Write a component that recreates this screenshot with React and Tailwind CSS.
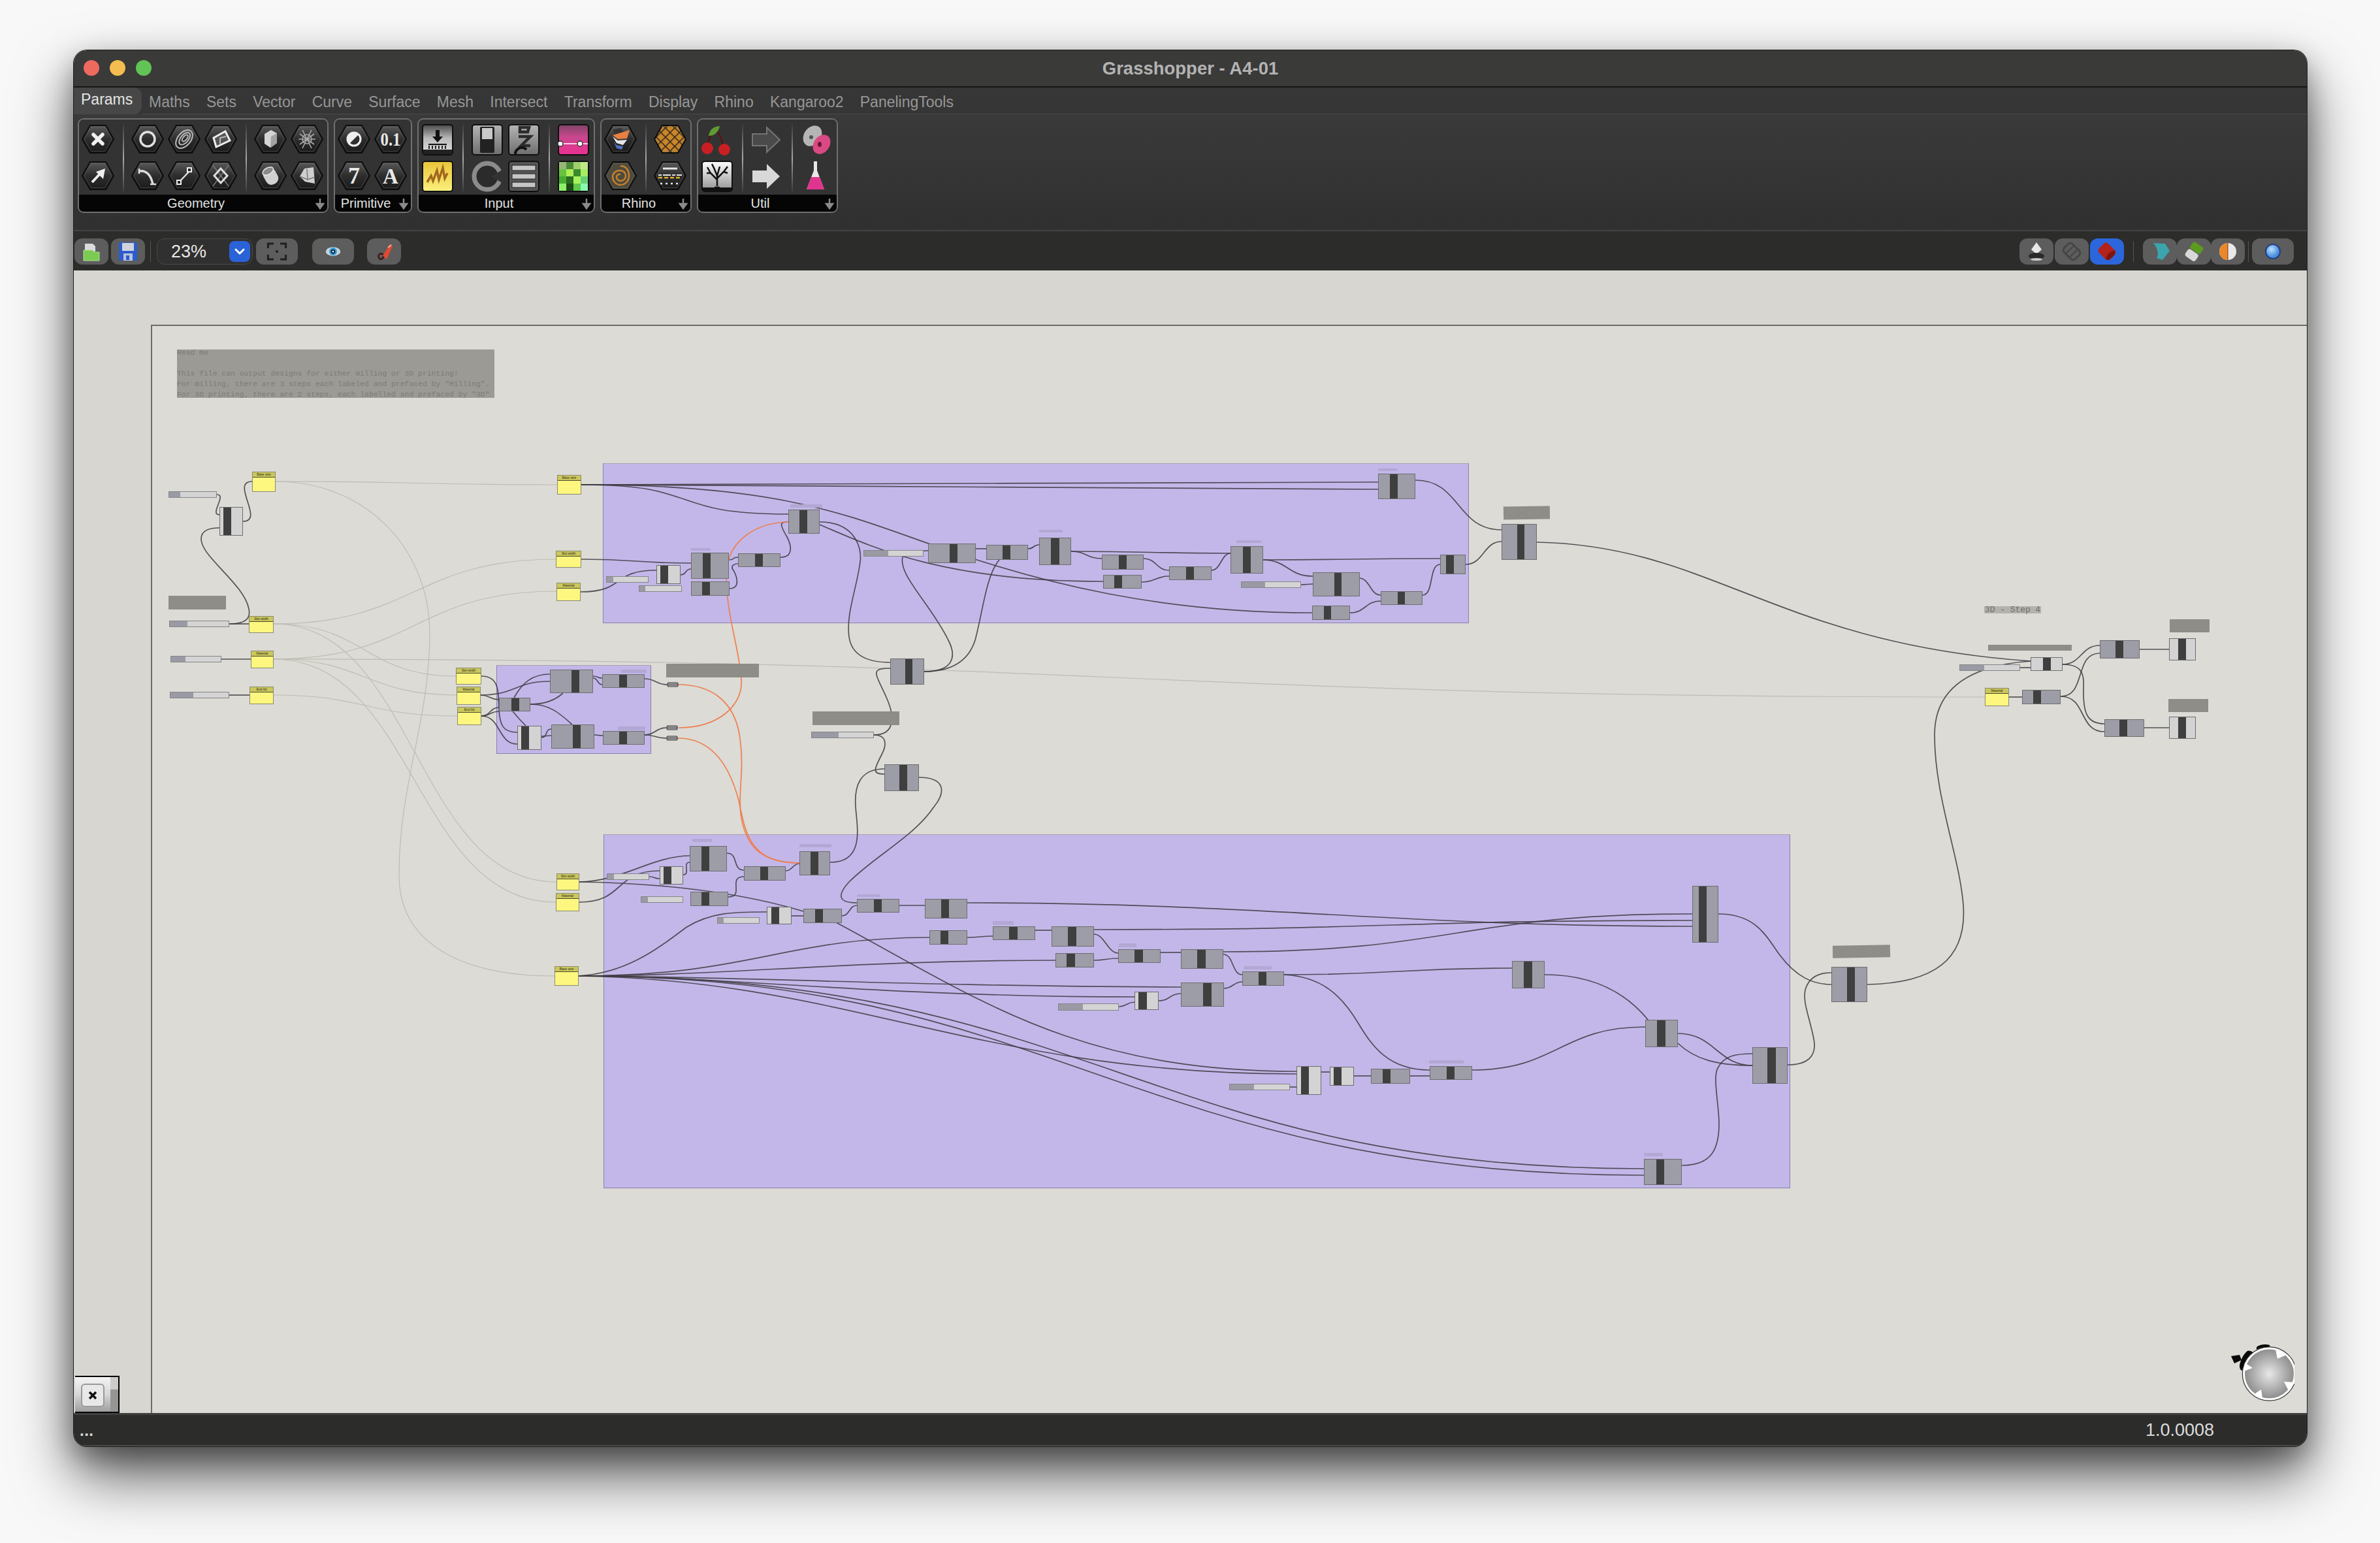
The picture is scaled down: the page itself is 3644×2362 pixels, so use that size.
import React from "react";
import { ChevronDown } from "lucide-react";

// canvas origin in page pixels, all node data below is in page pixels
const OX = 113;
const OY = 414;
const CW = 3419;
const CH = 1749;

const TABS = ["Maths", "Sets", "Vector", "Curve", "Surface", "Mesh", "Intersect", "Transform", "Display", "Rhino", "Kangaroo2", "PanelingTools"];

const README = [
  "Read me",
  "\u00a0",
  "This file can output designs for either milling or 3D printing!",
  'For milling, there are 3 steps each labeled and prefaced by "Milling".',
  'For 3D printing, there are 2 steps, each labelled and prefaced by "3D"',
];

const GROUPS = [
  [923, 709, 1326, 245],
  [760, 1018, 237, 136],
  [924, 1277, 1817, 542],
];

// x, y, w, h, bar x, bar w (dark strip)
const COMPS = [
  [2110, 725, 57, 39, 2128, 12],
  [1421, 832, 73, 30, 1454, 12],
  [1510, 834, 64, 23, 1535, 12],
  [1591, 823, 49, 42, 1609, 13],
  [1687, 849, 64, 23, 1713, 12],
  [1689, 880, 59, 21, 1706, 12],
  [1790, 867, 65, 21, 1816, 12],
  [1884, 836, 50, 42, 1903, 12],
  [2010, 876, 72, 37, 2043, 11],
  [2009, 927, 58, 22, 2027, 11],
  [2114, 905, 64, 21, 2140, 11],
  [2205, 849, 39, 30, 2214, 12],
  [2299, 802, 54, 55, 2323, 11],
  [1058, 846, 58, 40, 1076, 12],
  [1058, 890, 59, 22, 1075, 12],
  [1130, 847, 65, 21, 1156, 12],
  [1207, 780, 48, 37, 1224, 12],
  [842, 1025, 66, 36, 875, 12],
  [922, 1032, 65, 21, 948, 12],
  [764, 1068, 48, 21, 783, 12],
  [844, 1109, 66, 37, 877, 12],
  [923, 1119, 64, 21, 948, 12],
  [1363, 1008, 52, 40, 1386, 11],
  [1354, 1170, 53, 41, 1377, 12],
  [1056, 1295, 57, 39, 1074, 12],
  [1139, 1326, 64, 22, 1164, 12],
  [1224, 1303, 47, 37, 1241, 12],
  [1057, 1365, 58, 22, 1074, 12],
  [1230, 1391, 59, 22, 1248, 12],
  [1312, 1376, 65, 21, 1338, 12],
  [1416, 1376, 65, 30, 1441, 12],
  [1423, 1424, 58, 22, 1440, 12],
  [1520, 1418, 65, 21, 1545, 13],
  [1610, 1418, 65, 31, 1635, 13],
  [1616, 1459, 59, 22, 1633, 13],
  [1712, 1453, 65, 21, 1737, 13],
  [1808, 1453, 65, 30, 1833, 13],
  [1902, 1487, 64, 22, 1927, 12],
  [1808, 1504, 66, 37, 1842, 13],
  [2315, 1471, 50, 42, 2333, 13],
  [2591, 1356, 40, 87, 2601, 12],
  [2519, 1561, 50, 42, 2537, 13],
  [2683, 1603, 54, 56, 2706, 13],
  [2189, 1632, 65, 21, 2215, 12],
  [2099, 1636, 60, 23, 2117, 12],
  [2517, 1774, 58, 40, 2536, 12],
  [2804, 1480, 55, 54, 2828, 12],
  [3096, 1056, 59, 22, 3113, 12],
  [3215, 980, 61, 28, 3239, 12],
  [3222, 1101, 61, 27, 3245, 12],
];

const LIGHT_COMPS = [
  [336, 776, 36, 44, 342, 12],
  [1005, 865, 37, 29, 1011, 12],
  [792, 1111, 37, 37, 798, 12],
  [1010, 1326, 36, 28, 1016, 12],
  [1174, 1388, 38, 27, 1181, 12],
  [1737, 1518, 37, 28, 1743, 13],
  [2036, 1633, 37, 29, 2042, 12],
  [1985, 1632, 38, 44, 1992, 12],
  [3109, 1006, 49, 21, 3128, 12],
  [3321, 977, 41, 34, 3335, 12],
  [3321, 1097, 41, 34, 3335, 12],
];

const SLIDERS = [
  [258, 752, 74, 10, 17],
  [259, 950, 92, 10, 27],
  [261, 1004, 78, 10, 22],
  [260, 1059, 91, 10, 35],
  [928, 882, 65, 10, 10],
  [978, 896, 66, 10, 9],
  [1322, 842, 92, 10, 37],
  [1900, 890, 92, 10, 36],
  [1242, 1120, 96, 10, 41],
  [929, 1337, 65, 10, 10],
  [981, 1372, 65, 10, 10],
  [1098, 1404, 65, 10, 9],
  [1620, 1536, 93, 11, 37],
  [1882, 1659, 93, 10, 37],
  [3000, 1017, 93, 10, 37],
];

const PANELS = [
  [386, 722, 36, 31, "Base size"],
  [853, 727, 37, 30, "Base size"],
  [851, 843, 39, 26, "Slot width"],
  [852, 892, 37, 28, "Material"],
  [381, 943, 38, 26, "Slot width"],
  [384, 996, 35, 27, "Material"],
  [382, 1051, 37, 27, "End bit"],
  [698, 1022, 39, 26, "Slot width"],
  [699, 1051, 37, 28, "Material"],
  [700, 1082, 37, 28, "End bit"],
  [852, 1337, 35, 26, "Slot width"],
  [851, 1367, 36, 28, "Material"],
  [849, 1479, 37, 30, "Base size"],
  [3039, 1053, 37, 28, "Material"],
];

// gray scribble blocks, last value tilts it
const BLOCKS = [
  [258, 912, 88, 21, false],
  [1020, 1016, 142, 21, false],
  [1244, 1089, 133, 21, false],
  [2302, 775, 71, 20, true],
  [2806, 1447, 88, 19, true],
  [3044, 987, 128, 9, false],
  [3322, 948, 61, 20, false],
  [3320, 1070, 61, 20, false],
];

// faint name tags above components inside groups
const TAGS = [
  [2110, 717, 29, 4],
  [1591, 811, 36, 4],
  [1893, 827, 38, 4],
  [1058, 839, 30, 4],
  [1210, 772, 49, 5],
  [951, 1025, 39, 5],
  [946, 1112, 42, 6],
  [1060, 1284, 30, 5],
  [1224, 1292, 49, 5],
  [1312, 1369, 36, 4],
  [1520, 1410, 32, 6],
  [1713, 1444, 27, 6],
  [1904, 1479, 43, 5],
  [2188, 1623, 53, 5],
  [2517, 1765, 29, 5],
];

const RELAYS = [
  [1021, 1044],
  [1020, 1110],
  [1020, 1126],
];

// wire with horizontal tangents, the way grasshopper draws them
const w = (x1, y1, x2, y2, k) => {
  const d = k === undefined ? Math.max(Math.abs(x2 - x1) * 0.5, 10) : k;
  return `M${x1} ${y1} C${x1 + d} ${y1} ${x2 - d} ${y2} ${x2} ${y2}`;
};

const FAINT = [
  w(422, 737, 853, 742),
  "M422 737 C560 737 660 840 658 975 C656 1110 611 1200 611 1340 C611 1440 700 1494 849 1494",
  w(419, 955, 851, 856),
  w(419, 1009, 852, 905),
  w(419, 955, 698, 1035),
  w(419, 955, 852, 1350),
  w(419, 1009, 699, 1064),
  w(419, 1009, 851, 1381),
  w(419, 1009, 3039, 1067),
  w(419, 1064, 700, 1096),
];

const DARK = [
  w(332, 757, 336, 788, 16),
  w(372, 798, 386, 737, 34),
  "M352 955 C378 955 384 945 381 932 C376 905 340 875 320 850 C300 825 305 808 336 808",
  w(351, 955, 381, 955),
  w(339, 1009, 384, 1009),
  w(351, 1064, 382, 1064),
  // group 1
  w(890, 742, 2110, 738),
  w(890, 742, 2110, 749),
  w(890, 742, 1207, 787, 190),
  "M890 742 C1200 742 1300 790 1430 835 C1600 895 1780 938 2009 938",
  w(890, 856, 1058, 862),
  w(889, 906, 1005, 873, 70),
  w(1042, 880, 1058, 871),
  w(1116, 857, 1130, 853),
  "M1117 901 C1135 901 1128 880 1121 870 C1120 865 1125 863 1130 863",
  "M1195 853 C1215 853 1212 835 1205 822 C1192 800 1195 799 1207 799",
  "M1255 799 C1310 799 1320 840 1317 860 C1312 900 1295 940 1300 975 C1305 1010 1340 1014 1363 1014",
  "M1255 803 C1340 840 1450 890 1689 890",
  "M1415 1028 C1460 1028 1465 1005 1452 980 C1425 925 1375 880 1382 853 C1385 845 1400 843 1421 843",
  "M1415 1028 C1465 1028 1485 1005 1493 980 C1505 935 1510 880 1530 857",
  w(1494, 840, 1510, 840),
  w(1574, 840, 1591, 834),
  w(1640, 844, 1884, 847),
  w(1640, 844, 1687, 855, 24),
  w(1751, 855, 1790, 873),
  w(1748, 891, 1790, 882),
  w(1855, 873, 1884, 847, 14),
  w(1933, 857, 2205, 855),
  w(1933, 857, 2010, 882),
  w(1992, 895, 2010, 894),
  w(2081, 885, 2114, 911),
  w(2067, 938, 2114, 920),
  w(2178, 911, 2205, 864, 18),
  w(2244, 864, 2299, 829),
  w(2167, 735, 2299, 811, 70),
  "M2353 830 C2620 835 2720 985 3109 1012",
  // group 2
  "M737 1035 C765 1035 763 1060 764 1085 C765 1110 770 1121 792 1121",
  w(736, 1064, 842, 1043),
  w(736, 1064, 764, 1071),
  w(737, 1096, 764, 1083, 14),
  w(737, 1096, 764, 1089, 14),
  w(737, 1096, 792, 1139, 30),
  "M812 1078 C835 1078 850 1072 862 1061",
  "M787 1068 C800 1045 815 1032 842 1032",
  "M812 1078 C840 1078 855 1090 876 1109",
  "M785 1089 C790 1095 797 1103 805 1111",
  w(829, 1129, 844, 1116, 10),
  w(829, 1127, 844, 1126, 8),
  w(908, 1035, 922, 1038, 8),
  w(908, 1038, 922, 1048, 8),
  w(910, 1125, 923, 1126),
  w(987, 1039, 1021, 1048),
  w(987, 1125, 1020, 1114),
  w(987, 1125, 1020, 1130),
  // middle
  "M1338 1125 C1372 1125 1370 1095 1356 1065 C1340 1030 1332 1023 1363 1023",
  "M1338 1125 C1358 1125 1358 1140 1350 1155 C1338 1178 1335 1185 1354 1185",
  "M1354 1177 C1315 1177 1308 1205 1310 1235 C1312 1265 1325 1320 1271 1320",
  "M1407 1190 C1445 1190 1450 1210 1430 1235 C1400 1280 1340 1310 1300 1350 C1280 1372 1285 1382 1312 1382",
  // group 3
  "M887 1350 C950 1350 1000 1310 1056 1310",
  "M887 1350 C1010 1352 1130 1365 1230 1395",
  w(887, 1381, 1010, 1333, 70),
  w(994, 1342, 1010, 1345),
  w(1046, 1339, 1056, 1320, 12),
  w(1113, 1306, 1139, 1332, 18),
  w(1115, 1373, 1139, 1342, 26),
  w(1203, 1333, 1224, 1322),
  "M886 1494 C960 1490 1010 1450 1050 1420 C1090 1395 1130 1396 1174 1396",
  "M886 1494 C1150 1494 1200 1435 1423 1435",
  "M886 1494 C1100 1494 1300 1470 1616 1470",
  "M886 1494 C1100 1494 1400 1510 1808 1511",
  "M886 1494 C1100 1494 1350 1526 1737 1526",
  "M1280 1412 C1500 1530 1650 1640 1985 1640",
  "M886 1494 C1300 1500 1500 1644 1985 1644",
  "M886 1494 C1673 1494 1759 1789 2517 1789",
  "M886 1494 C1620 1494 1740 1799 2517 1799",
  w(1212, 1402, 1230, 1402),
  w(1289, 1402, 1312, 1386, 12),
  w(1377, 1386, 1416, 1386),
  w(1481, 1435, 1520, 1433),
  w(1585, 1424, 1610, 1424),
  w(1675, 1430, 1712, 1459, 16),
  w(1675, 1470, 1712, 1467),
  w(1777, 1458, 1808, 1458),
  w(1873, 1461, 1902, 1492, 16),
  w(1874, 1513, 1902, 1503),
  w(1713, 1541, 1737, 1534),
  w(1774, 1532, 1808, 1521),
  w(1966, 1492, 2315, 1482),
  "M1966 1492 C2025 1495 2055 1525 2080 1567 C2100 1600 2125 1638 2189 1638",
  w(1975, 1664, 1985, 1664),
  w(2023, 1641, 2036, 1641),
  w(2073, 1647, 2099, 1647),
  w(2159, 1647, 2189, 1647),
  w(2254, 1638, 2519, 1572, 130),
  "M2365 1492 C2440 1492 2490 1520 2524 1562",
  "M2569 1582 C2625 1582 2630 1631 2683 1631",
  "M2569 1597 C2595 1622 2630 1631 2683 1631",
  w(1481, 1382, 2591, 1418, 450),
  w(1675, 1423, 2591, 1409),
  w(1873, 1457, 2591, 1399),
  "M2631 1399 C2690 1399 2705 1435 2725 1462 C2750 1495 2775 1507 2804 1507",
  "M2737 1630 C2770 1630 2782 1615 2777 1590 C2770 1555 2760 1535 2764 1515 C2770 1495 2785 1489 2804 1489",
  "M2575 1784 C2620 1784 2632 1760 2632 1720 C2632 1690 2622 1650 2630 1635 C2640 1615 2660 1613 2683 1613",
  "M2859 1507 C2960 1505 3012 1470 3006 1385 C3000 1310 2962 1220 2962 1125 C2962 1065 3000 1020 3109 1012",
  // step 4
  w(3093, 1022, 3109, 1022),
  w(3076, 1067, 3096, 1067),
  w(3158, 1017, 3215, 988),
  "M3158 1017 C3195 1017 3190 1040 3190 1060 C3190 1090 3195 1108 3222 1108",
  w(3155, 1066, 3215, 1000, 40),
  w(3155, 1066, 3222, 1120, 40),
  w(3276, 994, 3321, 994),
  w(3283, 1114, 3321, 1114),
];

const ORANGE = [
  "M1039 1114 C1100 1114 1138 1080 1135 1040 C1132 990 1108 930 1113 870 C1118 825 1160 800 1207 799",
  "M1039 1048 C1085 1048 1125 1070 1133 1130 C1140 1180 1130 1210 1134 1245 C1140 1290 1160 1321 1224 1321",
  "M1038 1130 C1085 1130 1115 1165 1131 1225 C1142 1280 1150 1321 1224 1321",
];

const HEX_POINTS = "4,28 16,7 40,7 52,28 40,49 16,49";

const Hex = ({ fill = "url(#hexFill)", children }) => (
  <svg viewBox="0 0 56 56" className="block w-14 h-14">
    <polygon points={HEX_POINTS} fill={fill} stroke="#0c0c0c" strokeWidth="2" />
    <polygon points="7,28 17.5,9.5 38.5,9.5 49,28 38.5,46.5 17.5,46.5" fill="none" stroke="#6a6a6a" strokeOpacity="0.45" strokeWidth="1" />
    {children}
  </svg>
);

const Square = ({ fill = "url(#squareFill)", children }) => (
  <svg viewBox="0 0 56 56" className="block w-14 h-14">
    <rect x="5" y="6" width="46" height="46" rx="4" fill={fill} stroke="#0f0f0f" strokeWidth="2" />
    {children}
  </svg>
);

const Bare = ({ children }) => (
  <svg viewBox="0 0 56 56" className="block w-14 h-14">
    {children}
  </svg>
);

const HexText = ({ children, size = 36, y = 40, length }) => (
  <text
    x="28"
    y={y}
    textAnchor="middle"
    fontFamily="Liberation Serif, serif"
    fontWeight="700"
    fontSize={size}
    fill="#e8e8e8"
    textLength={length}
    lengthAdjust={length ? "spacingAndGlyphs" : undefined}
  >
    {children}
  </text>
);

const Col = ({ top, bottom }) => (
  <div className="flex flex-col w-14">
    {top}
    {bottom}
  </div>
);

const Sep = () => (
  <div className="ml-[10px] mr-2 w-[2px] h-[105px] mt-[5px] bg-gradient-to-b from-[#3a3a3a] via-[#a8a8a8] to-[#3a3a3a]" />
);

const Panel = ({ label, children }) => (
  <div className="flex flex-col h-[145px] rounded-[9px] border-2 border-[#6f6f6f] overflow-hidden">
    <div className="flex flex-1 pl-px pr-[3px] pt-[2px] bg-[#333333]">{children}</div>
    <div className="flex items-center h-[26px] bg-[#050505] relative">
      <span className="flex-1 pr-[22px] text-center text-[20px] leading-none text-[#e2e2e2]">{label}</span>
      <svg viewBox="0 0 16 18" className="absolute right-[3px] top-[5px] w-4 h-[18px]">
        <path d="M8 1 V10 M3 9 H13 L8 16 Z" stroke="#8a8a8a" strokeWidth="2.5" fill="#8a8a8a" />
      </svg>
    </div>
  </div>
);

const GeometryPanel = () => (
  <Panel label="Geometry">
    <Col
      top={<Hex><path d="M21 21 L35 35 M35 21 L21 35" stroke="#f0f0f0" strokeWidth="5.5" strokeLinecap="round" /></Hex>}
      bottom={<Hex><path d="M19 38 L32 24" stroke="#eee" strokeWidth="4" /><polygon points="39,17 36,33 25,22" fill="#eee" /></Hex>}
    />
    <Sep />
    <Col
      top={<Hex><circle cx="28" cy="28" r="11" fill="none" stroke="#e0e0e0" strokeWidth="3.5" /></Hex>}
      bottom={<Hex><path d="M15 21 C26 19 33 27 36 41" fill="none" stroke="#dddddd" strokeWidth="3.5" /><path d="M15 17 V25 M32 41 H41" stroke="#dddddd" strokeWidth="2.5" /></Hex>}
    />
    <Col
      top={<Hex><g fill="none" stroke="#b9b9b9" strokeWidth="2" transform="rotate(-50 28 28)"><ellipse cx="28" cy="28" rx="16" ry="10" /><ellipse cx="29" cy="28" rx="11" ry="6" /><ellipse cx="30" cy="28" rx="6" ry="3" /></g></Hex>}
      bottom={<Hex><path d="M20 38 L36 21" stroke="#ddd" strokeWidth="2.5" /><rect x="17" y="35" width="6" height="6" fill="#222" stroke="#eee" strokeWidth="2" /><rect x="33" y="16" width="6" height="6" fill="#222" stroke="#eee" strokeWidth="2" /></Hex>}
    />
    <Col
      top={<Hex><polygon points="17,26 35,16 42,30 21,40" fill="#555" stroke="#eeeeee" strokeWidth="3" /><path d="M27 35 V26 L36 24" fill="none" stroke="#bbb" strokeWidth="2" /></Hex>}
      bottom={<Hex><path d="M16 12 L40 44 M40 12 L16 44" stroke="#7a7a7a" strokeWidth="1.5" /><polygon points="28,17 38,28 28,39 18,28" fill="none" stroke="#dedede" strokeWidth="3" /></Hex>}
    />
    <Sep />
    <Col
      top={<Hex><polygon points="19,20 29,14 38,19 38,34 28,41 19,35" fill="#d4d4d4" /><polygon points="29,24 38,19 38,34 28,41" fill="#a3a3a3" /></Hex>}
      bottom={<Hex><g transform="rotate(-28 28 28)"><rect x="18" y="16" width="20" height="26" rx="9" fill="#d0d0d0" /><ellipse cx="28" cy="20" rx="9" ry="5" fill="#8a8a8a" stroke="#e6e6e6" strokeWidth="1.5" /></g></Hex>}
    />
    <Col
      top={<Hex><g stroke="#a9a9a9" strokeWidth="1.6" fill="none"><path d="M15 28 H41 M21 14 L35 42 M35 14 L21 42" /><path d="M17 20 L39 36 M39 20 L17 36" /><circle cx="28" cy="28" r="7" /></g></Hex>}
      bottom={<Hex><polygon points="24,17 38,15 40,40 25,37 17,29" fill="#cfcfcf" /><path d="M28 18 L29 34 M17 29 L29 34 L40 30" fill="none" stroke="#777" strokeWidth="1.5" /></Hex>}
    />
  </Panel>
);

const PrimitivePanel = () => (
  <Panel label="Primitive">
    <Col
      top={<Hex><circle cx="28" cy="28" r="10" fill="#eeeeee" /><path d="M21 35 A10 10 0 0 1 35 21 Z" fill="#2e2e2e" transform="rotate(180 28 28)" /><circle cx="28" cy="28" r="10" fill="none" stroke="#eeeeee" strokeWidth="3" /></Hex>}
      bottom={<Hex><HexText>7</HexText></Hex>}
    />
    <Col
      top={<Hex><HexText size={30} y={38} length={31}>0.1</HexText></Hex>}
      bottom={<Hex><HexText size={33} y={40}>A</HexText></Hex>}
    />
  </Panel>
);

const InputPanel = () => (
  <Panel label="Input">
    <Col
      top={
        <Square>
          <polygon points="25,14 31,14 31,24 36,24 28,33 20,24 25,24" fill="#111" />
          <rect x="14" y="35" width="28" height="2" fill="#111" />
          <path d="M15 38 V43 M20 38 V43 M25 38 V43 M30 38 V43 M35 38 V43 M40 38 V43" stroke="#222" strokeWidth="2" />
          <rect x="6" y="44" width="44" height="7" fill="#222" />
        </Square>
      }
      bottom={
        <Square fill="url(#yellowFill)">
          <path d="M12 38 L18 28 L21 36 L27 20 L30 34 L36 16 L39 32 L43 24" fill="none" stroke="#a3691f" strokeWidth="3.5" />
        </Square>
      }
    />
    <Sep />
    <Col
      top={
        <Square fill="url(#toggleFill)">
          <rect x="17" y="9" width="22" height="40" rx="2" fill="#222" />
          <rect x="20" y="11" width="16" height="17" fill="#c9c9c9" />
        </Square>
      }
      bottom={
        <Bare>
          <circle cx="28" cy="29" r="20" fill="#2b2b2b" stroke="#8b8b8b" strokeWidth="7" />
          <polygon points="34,29 56,16 56,42" fill="#333333" />
        </Bare>
      }
    />
    <Col
      top={
        <Square fill="url(#toggleFill)">
          <path d="M22 10 L36 10 L34 17 L22 17 Z M20 24 H38 L24 38 H38" fill="none" stroke="#2b2b2b" strokeWidth="4.5" />
          <path d="M15 52 A10 10 0 0 1 32 44" fill="none" stroke="#111" strokeWidth="4" />
        </Square>
      }
      bottom={
        <Square fill="#555">
          <rect x="10" y="12" width="36" height="8" fill="#c6c6c6" stroke="#222" />
          <rect x="10" y="25" width="36" height="8" fill="#c6c6c6" stroke="#222" />
          <rect x="10" y="38" width="36" height="8" fill="#c6c6c6" stroke="#222" />
        </Square>
      }
    />
    <Sep />
    <Col
      top={
        <Square fill="url(#pinkFill)">
          <path d="M6 35 H50" stroke="#ffffff" strokeWidth="1.5" />
          <circle cx="8" cy="35" r="4" fill="#fff" stroke="#333" strokeWidth="1.5" />
          <circle cx="38" cy="35" r="4" fill="#fff" stroke="#333" strokeWidth="1.5" />
        </Square>
      }
      bottom={
        <Square fill="#79c84a">
          <rect x="6" y="7" width="11" height="11" fill="#96b776" />
          <rect x="17" y="7" width="11" height="11" fill="#4c8a39" />
          <rect x="28" y="7" width="11" height="11" fill="#a0d068" />
          <rect x="39" y="7" width="11" height="11" fill="#bfe88a" />
          <rect x="6" y="18" width="11" height="11" fill="#68c23e" />
          <rect x="28" y="18" width="11" height="11" fill="#3b8b2c" />
          <rect x="39" y="18" width="11" height="11" fill="#a6ec63" />
          <rect x="17" y="18" width="11" height="11" fill="#aeef58" />
          <rect x="6" y="29" width="11" height="11" fill="#45ad31" />
          <rect x="17" y="29" width="11" height="11" fill="#2b6e20" />
          <rect x="28" y="29" width="11" height="11" fill="#a7f25c" />
          <rect x="39" y="29" width="11" height="11" fill="#66d074" />
          <rect x="6" y="40" width="11" height="11" fill="#8df066" />
          <rect x="17" y="40" width="11" height="11" fill="#1d4a16" />
          <rect x="28" y="40" width="11" height="11" fill="#5ec84a" />
          <rect x="39" y="40" width="11" height="11" fill="#8af7b0" />
        </Square>
      }
    />
  </Panel>
);

const RhinoPanel = () => (
  <Panel label="Rhino">
    <Col
      top={
        <Hex>
          <polygon points="16,14 28,11 42,26 30,38" fill="#333" />
          <polygon points="16,22 42,14 38,27 24,28" fill="#e87f43" />
          <polygon points="16,24 24,30 38,29 32,37 22,34" fill="#e6e6e6" />
          <polygon points="18,32 22,37 32,39 30,44 22,42" fill="#4c6fc0" />
        </Hex>
      }
      bottom={
        <Hex fill="#4d4b3d">
          <path d="M28 13 C37 13 41 20 41 28 C41 36 35 42 28 42 C21 42 16 36 16 30 C16 24 21 20 27 20 C33 20 36 24 36 28 C36 33 32 36 28 36 C25 36 22 33 22 30 C22 27 25 25 28 26" fill="none" stroke="#c97f2c" strokeWidth="2.5" />
        </Hex>
      }
    />
    <Sep />
    <Col
      top={<Hex fill="url(#lattice)" />}
      bottom={
        <Hex>
          <path d="M17 17 H39" stroke="#e5e5e5" strokeWidth="3" />
          <path d="M10 27 H46" stroke="#e5e5e5" strokeWidth="2" strokeDasharray="5 2 12 2" />
          <path d="M10 31 H46" stroke="#e1b230" strokeWidth="2.5" strokeDasharray="6 3" />
          <path d="M13 40 H43" stroke="#e5e5e5" strokeWidth="2.5" strokeDasharray="3 5" />
        </Hex>
      }
    />
  </Panel>
);

const UtilPanel = () => (
  <Panel label="Util">
    <Col
      top={
        <Bare>
          <path d="M24 11 C18 22 15 28 13 36 M24 11 C32 20 36 28 37 38" fill="none" stroke="#5d0f0f" strokeWidth="2" />
          <path d="M15 23 C16 13 24 8 32 8 C30 17 24 23 15 23 Z" fill="#5f9a32" />
          <circle cx="13" cy="42" r="9" fill="#c81f24" />
          <circle cx="39" cy="44" r="9" fill="#c81f24" />
        </Bare>
      }
      bottom={
        <Square fill="url(#treeFill)">
          <path d="M28 44 V28 M28 34 L18 24 L13 15 M18 24 L12 24 M28 32 L38 22 L44 14 M38 22 L44 24 M28 28 L23 16 M23 16 L20 10 M28 28 L32 14 M24 46 H32" fill="none" stroke="#111" strokeWidth="2.5" />
          <rect x="6" y="46" width="44" height="6" fill="#111" />
        </Square>
      }
    />
    <Sep />
    <Col
      top={
        <Bare>
          <polygon points="6,20 28,20 28,10 48,29 28,48 28,38 6,38" fill="#4a4a4a" stroke="#757575" strokeWidth="2" />
        </Bare>
      }
      bottom={
        <Bare>
          <polygon points="6,20 28,20 28,10 48,29 28,48 28,38 6,38" fill="#d8d8d8" />
        </Bare>
      }
    />
    <Sep />
    <Col
      top={
        <Bare>
          <ellipse cx="22" cy="23" rx="13" ry="17" fill="#b5b5b5" transform="rotate(35 22 23)" />
          <circle cx="20" cy="25" r="3" fill="#555" />
          <ellipse cx="36" cy="36" rx="12" ry="16" fill="#d94a84" transform="rotate(35 36 36)" />
          <ellipse cx="33" cy="36" rx="3" ry="4" fill="#6d1533" />
        </Bare>
      }
      bottom={
        <Bare>
          <polygon points="24,6 29,6 29,20 40,49 13,49 24,20" fill="#e8e8e8" />
          <polygon points="20,30 33,30 40,49 13,49" fill="#e0358e" />
        </Bare>
      }
    />
  </Panel>
);

const ToolButton = ({ wide, blue, children }) => (
  <div className={`flex items-center justify-center h-10 rounded-xl ${wide ? "w-16" : "w-[52px]"} ${blue ? "bg-[#2c66dd]" : "bg-[#5d5d5d]"}`}>
    {children}
  </div>
);

const FolderIcon = () => (
  <svg viewBox="0 0 40 32" className="w-10 h-8">
    <path d="M10 4 H22 L26 8 V16 H10 Z" fill="#dcdcdc" />
    <path d="M8 14 H22 L24 17 H32 V30 H8 Z" fill="#7cca52" stroke="#a9e58e" strokeWidth="1" />
  </svg>
);

const SaveIcon = () => (
  <svg viewBox="0 0 40 32" className="w-10 h-8">
    <rect x="6" y="2" width="28" height="28" rx="2" fill="#2d5bd0" />
    <rect x="11" y="3" width="18" height="12" fill="#cfd4dc" />
    <rect x="13" y="19" width="14" height="11" fill="#b9c4dc" />
    <rect x="17" y="22" width="5" height="7" fill="#2d5bd0" />
  </svg>
);

const FitIcon = () => (
  <svg viewBox="0 0 40 32" className="w-[34px] h-7">
    <path d="M4 10 V2 H14 M26 2 H36 V10 M36 22 V30 H26 M14 30 H4 V22" fill="none" stroke="#1f1f1f" strokeWidth="3.5" />
    <path d="M17 16 L20 13 L23 16 L20 19 Z" fill="#1f1f1f" />
  </svg>
);

const EyeIcon = () => (
  <svg viewBox="0 0 40 32" className="w-[30px] h-6">
    <ellipse cx="20" cy="16" rx="15" ry="9" fill="#c8d4da" />
    <circle cx="20" cy="16" r="8" fill="#36a0dc" />
    <circle cx="20" cy="16" r="4.5" fill="#0f2238" />
    <circle cx="20" cy="16" r="2" fill="#cfe8ff" />
  </svg>
);

const BrushIcon = () => (
  <svg viewBox="0 0 40 32" className="w-10 h-8">
    <path d="M14 28 C8 22 14 18 18 20 C22 22 18 28 14 28" fill="none" stroke="#3c1a18" strokeWidth="2.5" />
    <path d="M18 22 L30 4 L33 8 L24 28 Z" fill="#e04a32" />
    <path d="M26 10 L31 6" stroke="#f2b3a0" strokeWidth="2" />
  </svg>
);

const RightIcons = {
  wire: (
    <svg viewBox="0 0 40 32" className="w-10 h-8">
      <path d="M20 2 L28 13 L20 20 L12 13 Z" fill="#e8e8e8" />
      <ellipse cx="20" cy="23" rx="12" ry="5" fill="#2a2a2a" />
      <ellipse cx="20" cy="28" rx="9" ry="2" fill="#c8c8c8" />
    </svg>
  ),
  ghost: (
    <svg viewBox="0 0 40 32" className="w-10 h-8">
      <g transform="rotate(45 20 16)" fill="none" stroke="#454545" strokeWidth="3">
        <rect x="8" y="7" width="24" height="18" rx="5" />
        <path d="M16 8 V24 M24 8 V24" strokeWidth="2" />
      </g>
    </svg>
  ),
  red: (
    <svg viewBox="0 0 40 32" className="w-10 h-8">
      <g transform="rotate(45 20 16)">
        <rect x="8" y="6" width="24" height="20" rx="5" fill="#b3231b" />
        <ellipse cx="28" cy="16" rx="4" ry="9" fill="#7d1510" />
      </g>
    </svg>
  ),
  teal: (
    <svg viewBox="0 0 40 32" className="w-10 h-8">
      <path d="M10 3 L28 4 L35 15 L24 29 L15 26 C19 20 16 10 10 3 Z" fill="#3ca4ac" />
    </svg>
  ),
  green: (
    <svg viewBox="0 0 40 32" className="w-10 h-8">
      <g transform="rotate(35 20 16)">
        <rect x="11" y="3" width="19" height="12" rx="3" fill="#5b9c1f" />
        <rect x="11" y="16" width="19" height="13" rx="4" fill="#d8d8d8" />
      </g>
    </svg>
  ),
  half: (
    <svg viewBox="0 0 40 32" className="w-10 h-8">
      <circle cx="20" cy="16" r="13" fill="#e8e8e8" />
      <path d="M20 3 A13 13 0 0 0 20 29 Z" fill="#e8882a" />
      <path d="M20 3 V29" stroke="#8a2a12" strokeWidth="1" />
    </svg>
  ),
  sphere: (
    <svg viewBox="0 0 40 32" className="w-10 h-8">
      <circle cx="20" cy="16" r="11" fill="url(#sphereFill)" stroke="#23407f" strokeWidth="2" />
    </svg>
  ),
};

const Comp = ({ d, light }) => (
  <div
    className={`absolute flex border border-[#6d6d70] ${light ? "bg-[#d3d3d3]" : "bg-[#9d9da7]"}`}
    style={{ left: d[0] - OX, top: d[1] - OY, width: d[2], height: d[3] }}
  >
    <div style={{ width: d[4] - d[0] - 1 }} />
    <div className="bg-[#3f3f3f]" style={{ width: d[5] }} />
  </div>
);

const Slider = ({ d }) => (
  <div
    className="absolute flex border border-[#84858a] bg-[#d4d4d4]"
    style={{ left: d[0] - OX, top: d[1] - OY, width: d[2], height: d[3] }}
  >
    <div className="bg-[#9a9aa5]" style={{ width: d[4] }} />
  </div>
);

const YellowPanel = ({ d }) => (
  <div
    className="absolute flex flex-col border border-[#8b8a72] bg-[#fdf77f]"
    style={{ left: d[0] - OX, top: d[1] - OY, width: d[2], height: d[3] }}
  >
    <div className="flex items-center justify-center h-2 bg-[#cbc75c] border-b border-[#4c4a2c] text-[5px] leading-none whitespace-nowrap text-[#2a2a1a]">
      {d[4]}
    </div>
  </div>
);

const Canvas = () => (
  <div className="relative flex-1 overflow-hidden bg-[#d8d6d1]">
    <div className="absolute left-[118px] top-[83px] right-0 bottom-0 border-l-2 border-t-2 border-[#6c6c68] bg-[#dcdbd5]" />

    <div className="absolute left-[158px] top-[121px] w-[486px] h-[74px] bg-[#9b9a94] font-['Liberation_Mono',monospace] text-[11.4px] leading-[16px] text-[#7d7c76]">
      <div className="-mt-[3px]">
        {README.map((line, i) => (
          <div key={i} className="whitespace-nowrap">{line}</div>
        ))}
      </div>
    </div>

    {GROUPS.map((g, i) => (
      <div
        key={i}
        className="absolute bg-[#c3b7e9] border border-[#8b80ae] border-t-[#a9a4b3]"
        style={{ left: g[0] - OX, top: g[1] - OY, width: g[2], height: g[3] }}
      />
    ))}

    <svg className="absolute left-0 top-0 w-[3419px] h-[1749px]" viewBox={`${OX} ${OY} ${CW} ${CH}`} fill="none">
      {FAINT.map((p, i) => (
        <path key={i} d={p} stroke="#bdbcb4" strokeWidth="1.2" />
      ))}
      {DARK.map((p, i) => (
        <path key={i} d={p} stroke="#3c3a40" strokeOpacity="0.85" strokeWidth="1.7" />
      ))}
      {ORANGE.map((p, i) => (
        <path key={i} d={p} stroke="#ee7f50" strokeWidth="1.7" />
      ))}
    </svg>

    {TAGS.map((t, i) => (
      <div key={i} className="absolute bg-[#b3a8d4]" style={{ left: t[0] - OX, top: t[1] - OY, width: t[2], height: t[3] }} />
    ))}
    {BLOCKS.map((b, i) => (
      <div
        key={i}
        className={`absolute bg-[#8e8d87] ${b[4] ? "-rotate-1" : ""}`}
        style={{ left: b[0] - OX, top: b[1] - OY, width: b[2], height: b[3] }}
      />
    ))}
    {COMPS.map((d, i) => (
      <Comp key={i} d={d} />
    ))}
    {LIGHT_COMPS.map((d, i) => (
      <Comp key={i} d={d} light />
    ))}
    {SLIDERS.map((d, i) => (
      <Slider key={i} d={d} />
    ))}
    {PANELS.map((d, i) => (
      <YellowPanel key={i} d={d} />
    ))}
    {RELAYS.map((r, i) => (
      <div
        key={i}
        className="absolute w-[18px] h-2 rounded-sm bg-[#858585] border-x-2 border-[#5f5f5f]"
        style={{ left: r[0] - OX, top: r[1] - OY }}
      />
    ))}

    <div className="absolute left-[2925px] top-[514px] px-px h-[11px] flex items-center bg-[#b3b2ac] font-['Liberation_Mono',monospace] text-[12.9px] text-[#70706b] whitespace-nowrap">
      3D - Step 4
    </div>

    <svg className="absolute left-[3300px] top-[1640px] w-[100px] h-[100px]" viewBox="3413 2054 100 100">
      <path d="M3455 2062 C3460 2058 3468 2057 3475 2059 L3476 2064 C3468 2062 3460 2063 3455 2066 Z" fill="#0a0a0a" />
      <path d="M3441 2068 C3446 2067 3450 2070 3450 2072 C3442 2078 3436 2088 3433 2098 C3430 2098 3429 2094 3429 2090 C3431 2080 3436 2072 3441 2068 Z" fill="#0a0a0a" />
      <polygon points="3416,2076 3429,2074 3432,2082 3421,2087" fill="#0a0a0a" />
      <circle cx="3474.5" cy="2103" r="41" fill="url(#navFill)" stroke="#2f2f2f" strokeWidth="1.5" />
      <circle cx="3474.5" cy="2103" r="39" fill="none" stroke="#ffffff" strokeWidth="3" />
      <polygon points="3484,2066 3501,2074 3487,2080" fill="#fff" />
      <polygon points="3437,2086 3449,2094 3436,2099" fill="#fff" />
      <polygon points="3497,2115 3514,2116 3504,2129" fill="#fff" />
      <polygon points="3462,2127 3464,2140 3450,2135" fill="#fff" />
    </svg>

    <div className="absolute left-[2px] bottom-0 flex w-[68px] h-[57px] border-y-2 border-r-2 border-black bg-gradient-to-b from-[#f4f4f4] via-[#d7d7d7] to-[#9f9f9f]">
      <div className="flex items-center justify-center ml-[9px] mt-[10px] w-9 h-9 rounded-md bg-[#e8e8e8] border-2 border-[#9a9a9a]">
        <svg viewBox="0 0 20 20" className="w-5 h-5">
          <path d="M5 5 L15 15 M15 5 L5 15" stroke="#111" strokeWidth="3.5" />
        </svg>
      </div>
      <div className="flex flex-col ml-auto w-3 h-full">
        <div className="h-[19px] bg-[#cbcbcb]" />
        <div className="flex-1 bg-[#959595]" />
      </div>
    </div>
  </div>
);

export default function App() {
  return (
    <div className="w-[3644px] h-[2362px] overflow-hidden bg-[#f8f8f8] pt-[77px] pl-[113px] font-['Liberation_Sans',sans-serif]">
      <svg className="absolute w-0 h-0">
        <defs>
          <linearGradient id="hexFill" x1="0" y1="0" x2="0" y2="1">
            <stop offset="0" stopColor="#5a5a5a" />
            <stop offset="0.5" stopColor="#2d2d2d" />
            <stop offset="1" stopColor="#1a1a1a" />
          </linearGradient>
          <linearGradient id="squareFill" x1="0" y1="0" x2="0" y2="1">
            <stop offset="0" stopColor="#4a4a4a" />
            <stop offset="0.45" stopColor="#b9b9b9" />
            <stop offset="1" stopColor="#e2e2e2" />
          </linearGradient>
          <linearGradient id="toggleFill" x1="0" y1="0" x2="0" y2="1">
            <stop offset="0" stopColor="#b5b5b5" />
            <stop offset="1" stopColor="#6e6e6e" />
          </linearGradient>
          <linearGradient id="yellowFill" x1="0" y1="0" x2="0" y2="1">
            <stop offset="0" stopColor="#e8c53a" />
            <stop offset="1" stopColor="#fbf07e" />
          </linearGradient>
          <linearGradient id="pinkFill" x1="0" y1="0" x2="0" y2="1">
            <stop offset="0" stopColor="#7f4467" />
            <stop offset="0.4" stopColor="#c8478e" />
            <stop offset="1" stopColor="#ea2f90" />
          </linearGradient>
          <linearGradient id="treeFill" x1="0" y1="0" x2="0" y2="1">
            <stop offset="0" stopColor="#ffffff" />
            <stop offset="1" stopColor="#8f8f8f" />
          </linearGradient>
          <radialGradient id="navFill">
            <stop offset="0" stopColor="#e8e8e8" />
            <stop offset="1" stopColor="#868686" />
          </radialGradient>
          <radialGradient id="sphereFill" cx="0.4" cy="0.35">
            <stop offset="0" stopColor="#bfe2ff" />
            <stop offset="1" stopColor="#4a8fe0" />
          </radialGradient>
          <pattern id="lattice" width="10" height="10" patternUnits="userSpaceOnUse" patternTransform="rotate(45 28 28)">
            <rect width="10" height="10" fill="#c9862a" />
            <path d="M0 0 H10 M0 0 V10" stroke="#2a2218" strokeWidth="3" />
          </pattern>
        </defs>
      </svg>

      <div className="flex flex-col w-[3419px] h-[2137px] rounded-[20px] overflow-hidden shadow-[0_0_0_1px_#1c1c1c,0_44px_90px_rgba(0,0,0,0.65),0_16px_40px_rgba(0,0,0,0.3)]">
        {/* title bar */}
        <div className="relative flex items-center justify-center h-[55px] bg-[#3a3a39]">
          <div className="absolute left-[15px] top-[15px] flex gap-4">
            <span className="w-6 h-6 rounded-full bg-[#ee6a5f]" />
            <span className="w-6 h-6 rounded-full bg-[#f5bd4f]" />
            <span className="w-6 h-6 rounded-full bg-[#61c454]" />
          </div>
          <span className="text-[27.5px] font-bold text-[#b3b3b3]">Grasshopper - A4-01</span>
        </div>

        {/* tabs */}
        <div className="flex items-end h-[43px] bg-[#363636] border-t-2 border-[#151515]">
          <div className="flex items-start w-[104px] h-[41px] pl-[11px] pt-px rounded-tr-[12px] rounded-br-[12px] bg-[#474747] text-[23px] text-[#e4e4e4]">
            Params
          </div>
          <div className="flex flex-1 gap-[25.25px] pl-[11px] h-full pt-[9px] border-b border-[#4a4a4a] text-[23px] leading-[27px] text-[#969696]">
            {TABS.map((t) => (
              <span key={t}>{t}</span>
            ))}
          </div>
        </div>

        {/* ribbon */}
        <div className="flex gap-2 h-[177px] pl-[6px] pt-[6px] bg-gradient-to-b from-[#3a3a3a] to-[#303030]">
          <GeometryPanel />
          <PrimitivePanel />
          <InputPanel />
          <RhinoPanel />
          <UtilPanel />
        </div>

        {/* toolbar */}
        <div className="flex items-center h-[62px] pl-px pr-[20px] pt-[2px] bg-[#2c2c2b] border-t-2 border-[#434343]">
          <ToolButton><FolderIcon /></ToolButton>
          <div className="ml-1"><ToolButton><SaveIcon /></ToolButton></div>
          <div className="ml-[8px] w-px h-8 bg-[#555]" />
          <div className="flex items-center ml-[9px] w-[147px] h-10 pl-[21px] pr-[3px] rounded-xl border border-[#494949] bg-[#303030]">
            <span className="flex-1 text-[27px] text-[#e8e8e8]">23%</span>
            <div className="flex items-center justify-center w-8 h-8 rounded-lg bg-[#2a62d8]">
              <ChevronDown className="w-6 h-6 text-white" strokeWidth={3} />
            </div>
          </div>
          <div className="ml-[5px]"><ToolButton wide><FitIcon /></ToolButton></div>
          <div className="ml-[22px]"><ToolButton wide><EyeIcon /></ToolButton></div>
          <div className="ml-5"><ToolButton><BrushIcon /></ToolButton></div>

          <div className="flex items-center ml-auto">
            <div className="flex gap-[2px]">
              <ToolButton>{RightIcons.wire}</ToolButton>
              <ToolButton>{RightIcons.ghost}</ToolButton>
              <ToolButton blue>{RightIcons.red}</ToolButton>
            </div>
            <div className="mx-[14px] w-px h-8 bg-[#555]" />
            <ToolButton>{RightIcons.teal}</ToolButton>
            <ToolButton>{RightIcons.green}</ToolButton>
            <ToolButton>{RightIcons.half}</ToolButton>
            <div className="mx-[5px] w-px h-8 bg-[#555]" />
            <ToolButton wide>{RightIcons.sphere}</ToolButton>
          </div>
        </div>

        <Canvas />

        {/* status bar */}
        <div className="flex items-center justify-between h-[51px] pl-[9px] pr-[142px] bg-[#2c2c2b] border-t-[3px] border-[#404040] border-b-2 border-b-[#4a4a4a] text-[27px] text-[#dcdcdc]">
          <span className="text-[24px] font-bold tracking-[0.5px] pt-[2px]">...</span>
          <span>1.0.0008</span>
        </div>
      </div>
    </div>
  );
}
